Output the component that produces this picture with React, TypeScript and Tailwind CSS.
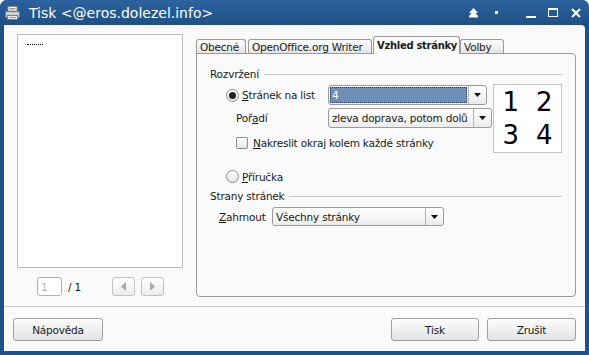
import type { ReactNode } from "react";

const ui = "font-['DejaVu_Sans',sans-serif] text-[10.5px] leading-[12px] tracking-[-0.2px] text-[#1a1a1a]";

function Arrow({ color = "#111" }: { color?: string }) {
  return (
    <svg width="7" height="4" viewBox="0 0 7 4">
      <path d="M0 0 L7 0 L3.5 4 Z" fill={color} />
    </svg>
  );
}

function Combo({
  value,
  className,
  selected,
}: {
  value: string;
  className: string;
  selected?: boolean;
}) {
  return (
    <div
      className={`${className} flex rounded-[3px] border border-[#9b9b9b] bg-gradient-to-b from-white to-[#ececec] overflow-hidden whitespace-nowrap`}
    >
      {selected ? (
        <div className="flex-1 m-[1px] bg-[#6f8fb7] border border-dotted border-[#203a5c] text-white pl-[1px] flex items-center">
          {value}
        </div>
      ) : (
        <div className="flex-1 pl-[3px] flex items-center">{value}</div>
      )}
      <div className="w-[18px] shrink-0 border-l border-[#b5b5b5] flex items-center justify-center">
        <Arrow />
      </div>
    </div>
  );
}

function Radio({ checked }: { checked?: boolean }) {
  return (
    <div className="w-[13px] h-[13px] shrink-0 rounded-full border border-[#8c8c8c] bg-gradient-to-b from-white to-[#e6e6e6] flex items-center justify-center">
      {checked && <div className="w-[7px] h-[7px] rounded-full bg-[#222]" />}
    </div>
  );
}

function Button({ children, className }: { children: ReactNode; className: string }) {
  return (
    <div
      className={`${className} h-[23px] rounded-[3px] border border-[#9f9f9f] bg-gradient-to-b from-[#fdfdfd] to-[#e3e3e3] flex items-center justify-center`}
    >
      {children}
    </div>
  );
}

function Section({ title }: { title: string }) {
  return (
    <div className="flex items-center gap-[5px]">
      <span>{title}</span>
      <div className="flex-1 h-px bg-[#c8c8c8]" />
    </div>
  );
}

function Tab({ label, active, className }: { label: string; active?: boolean; className: string }) {
  return (
    <div
      className={`${className} whitespace-nowrap overflow-hidden border border-b-0 border-[#9a9a9a] rounded-t-[3px] flex items-center pl-[3px] ${
        active
          ? "h-[18px] bg-[#fafafa] font-bold text-[10px] tracking-[-0.3px] -mb-px relative z-10"
          : "h-[14px] bg-gradient-to-b from-white to-[#e4e4e4]"
      }`}
    >
      {label}
    </div>
  );
}

function PrinterIcon() {
  return (
    <svg width="16" height="14" viewBox="0 0 16 14">
      <rect x="3" y="0.5" width="9" height="6" fill="#f4f4f4" stroke="#8a8a8a" />
      <path d="M4.5 2.5h6M4.5 4h6" stroke="#9a9a9a" />
      <rect x="0.5" y="5.5" width="14" height="6" rx="1" fill="#c9cfd6" stroke="#6d7680" />
      <rect x="2.5" y="9.5" width="10" height="4" fill="#eeeeee" stroke="#7b7b7b" />
      <path d="M4 11.5h7" stroke="#9a9a9a" />
    </svg>
  );
}

export default function App() {
  return (
    <div className={`${ui} w-[589px] h-[355px] bg-[#20508a] rounded-t-[7px] flex flex-col overflow-hidden`}>
      {/* title bar */}
      <div className="h-[25px] shrink-0 flex items-center bg-gradient-to-b from-[#2c639e] to-[#1f4f85] text-white">
        <div className="ml-[5px] mt-[1px]">
          <PrinterIcon />
        </div>
        <span className="ml-[8px] text-[14px] leading-[16px] tracking-normal">
          Tisk &lt;@eros.dolezel.info&gt;
        </span>
        <div className="flex-1" />
        <svg width="9" height="10" viewBox="0 0 9 10" className="mr-[17px]">
          <path d="M4.5 0 L9 5 L0 5 Z M4.5 3 L9 8 L0 8 Z" fill="white" />
          <rect x="0" y="8" width="9" height="1.5" fill="white" />
        </svg>
        <div className="w-[3px] h-[3px] bg-white mr-[28px]" />
        <div className="w-[10px] h-[2px] bg-white mt-[8px] mr-[12px]" />
        <div className="w-[10px] h-[9px] border border-white border-t-2 mr-[13px]" />
        <svg width="10" height="10" viewBox="0 0 10 10" className="mr-[8px]">
          <path d="M1 1 L9 9 M9 1 L1 9" stroke="white" strokeWidth="2" />
        </svg>
      </div>

      {/* body */}
      <div className="flex-1 mx-[4px] mb-[4px] bg-[#fafafa] rounded-tr-[4px] flex flex-col">
        <div className="flex h-[272px] shrink-0">
          {/* left preview column */}
          <div className="w-[192px] shrink-0 pl-[13px] pt-[9px] flex flex-col">
            <div className="w-[166px] h-[234px] bg-white border border-[#bcbcbc] pt-[9px] pl-[9px]">
              <div className="w-[16px] border-t border-dotted border-black" />
            </div>
            <div className="flex items-center mt-[9px]">
              <div className="ml-[20px] w-[25px] h-[19px] rounded-[3px] border border-[#b0b0b0] bg-white text-[#b5b5b5] pl-[3px] flex items-center">
                1
              </div>
              <span className="ml-[6px]">/ 1</span>
              <div className="ml-[31px] w-[23px] h-[19px] rounded-[3px] border border-[#c2c2c2] bg-gradient-to-b from-white to-[#ececec] flex items-center justify-center">
                <svg width="5" height="9" viewBox="0 0 5 9">
                  <path d="M5 0 L0 4.5 L5 9 Z" fill="#a9a9a9" />
                </svg>
              </div>
              <div className="ml-[6px] w-[23px] h-[19px] rounded-[3px] border border-[#c2c2c2] bg-gradient-to-b from-white to-[#ececec] flex items-center justify-center">
                <svg width="5" height="9" viewBox="0 0 5 9">
                  <path d="M0 0 L5 4.5 L0 9 Z" fill="#a9a9a9" />
                </svg>
              </div>
            </div>
          </div>

          {/* tab widget */}
          <div className="w-[380px] shrink-0 pt-[11px] flex flex-col">
            <div className="flex items-end h-[17px]">
              <Tab label="Obecné" className="w-[50px]" />
              <Tab label="OpenOffice.org Writer" className="w-[124px] ml-[2px]" />
              <Tab label="Vzhled stránky" active className="w-[87px] ml-[1px]" />
              <Tab label="Volby" className="w-[44px]" />
            </div>
            <div className="h-[244px] border border-[#9a9a9a] rounded-b-[4px] rounded-tr-[4px] bg-[#fafafa] px-[13px] pt-[14px] flex flex-col">
              <Section title="Rozvržení" />
              <div className="flex items-start mt-[5px]">
                <div className="flex flex-col w-[282px]">
                  <div className="flex items-center h-[20px] ml-[16px]">
                    <Radio checked />
                    <span className="ml-[3px] w-[86px]">
                      <span className="underline">S</span>tránek na list
                    </span>
                    <Combo value="4" selected className="w-[159px] h-[20px]" />
                  </div>
                  <div className="flex items-center h-[20px] mt-[3px] ml-[26px]">
                    <span className="w-[92px]">
                      Poř<span className="underline">a</span>dí
                    </span>
                    <Combo value="zleva doprava, potom dolů" className="w-[164px] h-[20px]" />
                  </div>
                  <div className="flex items-center mt-[9px] ml-[26px]">
                    <div className="w-[12px] h-[12px] border border-[#8c8c8c] rounded-[2px] bg-gradient-to-b from-white to-[#e6e6e6]" />
                    <span className="ml-[5px]">
                      <span className="underline">N</span>akreslit okraj kolem každé stránky
                    </span>
                  </div>
                  <div className="flex items-center mt-[21px] ml-[16px]">
                    <Radio />
                    <span className="ml-[3px]">
                      <span className="underline">P</span>říručka
                    </span>
                  </div>
                </div>
                <div className="ml-[1px] -mt-[1px] w-[69px] h-[69px] border border-[#c4c4c4] bg-white grid grid-cols-2 grid-rows-2 text-[26px] leading-none tracking-normal text-black">
                  <div className="flex items-center justify-center">1</div>
                  <div className="flex items-center justify-center">2</div>
                  <div className="flex items-center justify-center">3</div>
                  <div className="flex items-center justify-center">4</div>
                </div>
              </div>
              <div className="mt-[7px]">
                <Section title="Strany stránek" />
              </div>
              <div className="flex items-center mt-[5px] ml-[9px]">
                <span className="w-[53px]">
                  <span className="underline">Z</span>ahrnout
                </span>
                <Combo value="Všechny stránky" className="w-[172px] h-[19px]" />
              </div>
            </div>
          </div>
        </div>

        <div className="mt-[9px] h-px bg-[#c9c9c9]" />
        <div className="flex items-center mt-[11px]">
          <Button className="ml-[9px] w-[90px]">Nápověda</Button>
          <div className="flex-1" />
          <Button className="w-[88px]">Tisk</Button>
          <Button className="ml-[8px] mr-[9px] w-[89px]">Zrušit</Button>
        </div>
      </div>
    </div>
  );
}
